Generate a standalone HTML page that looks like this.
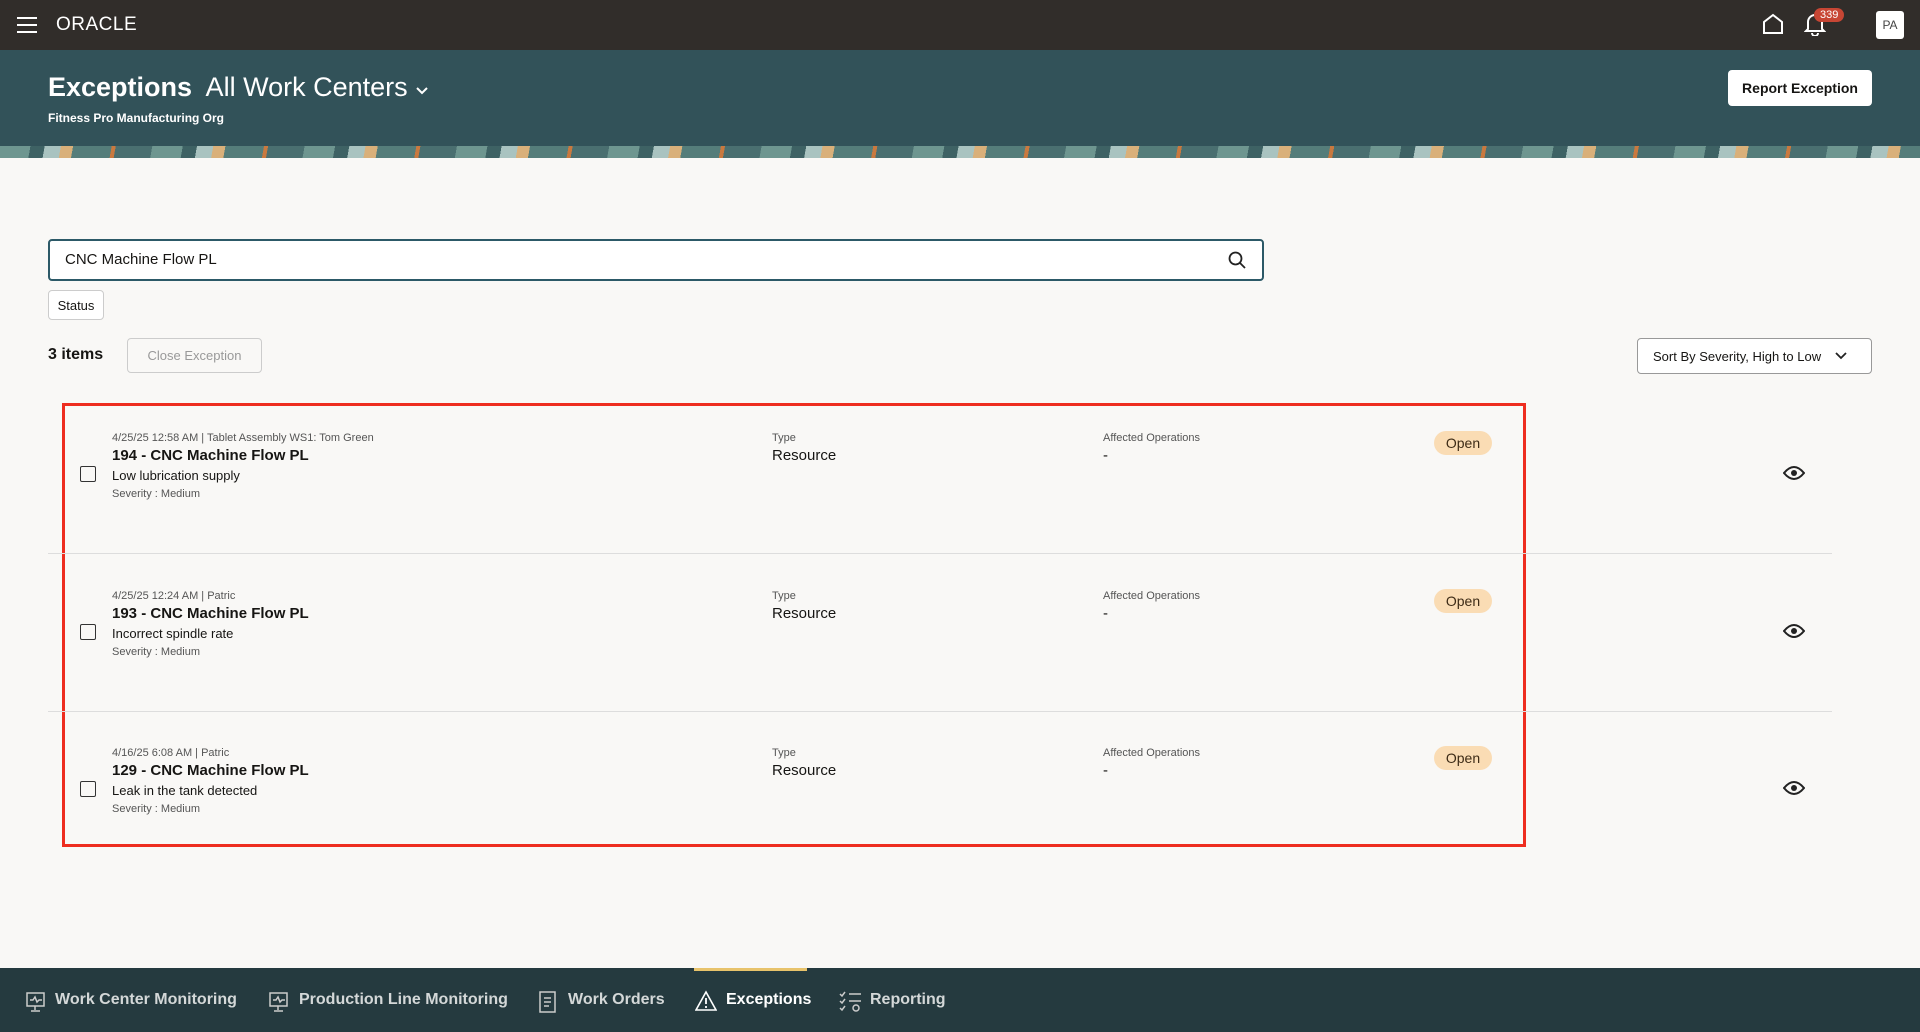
<!DOCTYPE html>
<html><head><meta charset="utf-8"><style>
*{box-sizing:border-box;margin:0;padding:0}
body{width:1920px;height:1032px;background:#f9f8f6;font-family:"Liberation Sans",sans-serif;color:#161513;position:relative;overflow:hidden}
.abs{position:absolute;white-space:nowrap}
.top{left:0;top:0;width:1920px;height:50px;background:#312d2a}
.hdr{left:0;top:50px;width:1920px;height:96px;background:#325259}
.band{left:0;top:146px;width:1920px;height:12px;background:repeating-linear-gradient(100deg,#6e9690 0 30px,#3e6264 30px 44px,#a9c3c0 44px 60px,#d9b07a 60px 72px,#557d7a 72px 110px,#c9793f 110px 114px,#4a6f70 114px 150px)}
.btn{background:#fff;border-radius:4px;font-size:14px;font-weight:bold;display:flex;align-items:center;justify-content:center}
.small{font-size:11px;color:#555}
.row .t{font-size:15px;font-weight:bold}
.cb{width:16px;height:16px;border:1.5px solid #333;border-radius:2px}
.pill{background:#fadcb4;border-radius:12px;font-size:14px;width:58px;height:24px;display:flex;align-items:center;justify-content:center;color:#3d2b16}
.nav{left:0;top:968px;width:1920px;height:64px;background:#253a3f}
.ni{top:991px;font-size:16px;color:#d4d8d8;font-weight:bold}
</style></head><body>
<div class="abs top"></div>
<svg class="abs" style="left:17px;top:17px" width="22" height="16"><path d="M0 1h20M0 8h20M0 15h20" stroke="#fff" stroke-width="2"/></svg>
<div class="abs" style="left:56px;top:14px;color:#fff;font-size:19px;letter-spacing:0.5px">ORACLE</div>
<svg class="abs" style="left:1762px;top:13px" width="22" height="22"><path d="M2 20V9L11 2l9 7v11z" fill="none" stroke="#fff" stroke-width="2"/></svg>
<svg class="abs" style="left:1804px;top:12px" width="22" height="24"><path d="M4 17V10a7 7 0 0 1 14 0v7l2 2H2zM8 21a3 3 0 0 0 6 0" fill="none" stroke="#fff" stroke-width="2"/></svg>
<div class="abs" style="left:1814px;top:8px;background:#c74634;color:#fff;font-size:11px;border-radius:9px;padding:1px 6px">339</div>
<div class="abs" style="left:1876px;top:11px;width:28px;height:28px;background:#fff;border-radius:3px;font-size:12px;color:#444;display:flex;align-items:center;justify-content:center">PA</div>
<div class="abs hdr"></div>
<div class="abs band"></div>
<div class="abs" style="left:48px;top:72px;color:#fff;font-size:27px"><b>Exceptions</b>&nbsp; All Work Centers <svg width="14" height="10"><path d="M2 2l5 5 5-5" fill="none" stroke="#fff" stroke-width="2"/></svg></div>
<div class="abs" style="left:48px;top:111px;color:#fff;font-size:12px;font-weight:bold">Fitness Pro Manufacturing Org</div>
<div class="abs btn" style="left:1728px;top:70px;width:144px;height:36px">Report Exception</div>
<div class="abs" style="left:48px;top:239px;width:1216px;height:42px;border:2px solid #2c5967;border-radius:4px;background:#fff;font-size:15px;padding:10px 15px">CNC Machine Flow PL</div>
<svg class="abs" style="left:1228px;top:251px" width="18" height="18"><circle cx="7.5" cy="7.5" r="6" fill="none" stroke="#222" stroke-width="1.8"/><path d="M12 12l5 5" stroke="#222" stroke-width="1.8"/></svg>
<div class="abs" style="left:48px;top:290px;width:56px;height:30px;border:1px solid #ccc;border-radius:4px;font-size:13px;display:flex;align-items:center;justify-content:center;background:#fff">Status</div>
<div class="abs" style="left:48px;top:346px;font-size:16px;font-weight:bold">3 items</div>
<div class="abs" style="left:127px;top:338px;width:135px;height:35px;border:1px solid #ccc;border-radius:4px;font-size:13px;color:#999;display:flex;align-items:center;justify-content:center">Close Exception</div>
<div class="abs" style="left:1637px;top:338px;width:235px;height:36px;border:1px solid #999;border-radius:4px;font-size:13px;display:flex;align-items:center;padding-left:15px;background:#fff">Sort By Severity, High to Low <svg style="margin-left:14px" width="12" height="8"><path d="M1 1l5 5 5-5" fill="none" stroke="#222" stroke-width="1.8"/></svg></div>
<div class="abs" style="left:62px;top:403px;width:1464px;height:444px;border:3px solid #ee2d1f"></div>
<div class="abs" style="left:48px;top:553px;width:1784px;height:1px;background:#ddd"></div>
<div class="abs" style="left:48px;top:711px;width:1784px;height:1px;background:#ddd"></div>

<div class="abs row" style="left:0;top:0">
<div class="abs cb" style="left:80px;top:466px"></div>
<div class="abs small" style="left:112px;top:432px">4/25/25 12:58 AM | Tablet Assembly WS1: Tom Green</div>
<div class="abs t" style="left:112px;top:447px">194 - CNC Machine Flow PL</div>
<div class="abs" style="left:112px;top:468px;font-size:13px">Low lubrication supply</div>
<div class="abs small" style="left:112px;top:488px">Severity : Medium</div>
<div class="abs small" style="left:772px;top:432px">Type</div><div class="abs" style="left:772px;top:447px;font-size:15px">Resource</div>
<div class="abs small" style="left:1103px;top:432px">Affected Operations</div><div class="abs" style="left:1103px;top:447px;font-size:15px">-</div>
<div class="abs pill" style="left:1434px;top:431px">Open</div>
<svg class="abs" style="left:1783px;top:465px" width="22" height="16"><path d="M1 8Q11-4 21 8Q11 20 1 8z" fill="none" stroke="#222" stroke-width="2"/><circle cx="11" cy="8" r="3" fill="#222"/></svg>
</div>
<div class="abs row" style="left:0;top:158px">
<div class="abs cb" style="left:80px;top:466px"></div>
<div class="abs small" style="left:112px;top:432px">4/25/25 12:24 AM | Patric</div>
<div class="abs t" style="left:112px;top:447px">193 - CNC Machine Flow PL</div>
<div class="abs" style="left:112px;top:468px;font-size:13px">Incorrect spindle rate</div>
<div class="abs small" style="left:112px;top:488px">Severity : Medium</div>
<div class="abs small" style="left:772px;top:432px">Type</div><div class="abs" style="left:772px;top:447px;font-size:15px">Resource</div>
<div class="abs small" style="left:1103px;top:432px">Affected Operations</div><div class="abs" style="left:1103px;top:447px;font-size:15px">-</div>
<div class="abs pill" style="left:1434px;top:431px">Open</div>
<svg class="abs" style="left:1783px;top:465px" width="22" height="16"><path d="M1 8Q11-4 21 8Q11 20 1 8z" fill="none" stroke="#222" stroke-width="2"/><circle cx="11" cy="8" r="3" fill="#222"/></svg>
</div>
<div class="abs row" style="left:0;top:315px">
<div class="abs cb" style="left:80px;top:466px"></div>
<div class="abs small" style="left:112px;top:432px">4/16/25 6:08 AM | Patric</div>
<div class="abs t" style="left:112px;top:447px">129 - CNC Machine Flow PL</div>
<div class="abs" style="left:112px;top:468px;font-size:13px">Leak in the tank detected</div>
<div class="abs small" style="left:112px;top:488px">Severity : Medium</div>
<div class="abs small" style="left:772px;top:432px">Type</div><div class="abs" style="left:772px;top:447px;font-size:15px">Resource</div>
<div class="abs small" style="left:1103px;top:432px">Affected Operations</div><div class="abs" style="left:1103px;top:447px;font-size:15px">-</div>
<div class="abs pill" style="left:1434px;top:431px">Open</div>
<svg class="abs" style="left:1783px;top:465px" width="22" height="16"><path d="M1 8Q11-4 21 8Q11 20 1 8z" fill="none" stroke="#222" stroke-width="2"/><circle cx="11" cy="8" r="3" fill="#222"/></svg>
</div>

<div class="abs nav"></div>
<div class="abs" style="left:694px;top:968px;width:113px;height:3px;background:#e8c36b"></div>
<svg class="abs" style="left:25px;top:991px" width="22" height="22"><rect x="2" y="2" width="17" height="13" fill="none" stroke="#ccc" stroke-width="1.5"/><path d="M5 9h3l2-3 2 5 2-2h3M10 15v4M6 20h9" fill="none" stroke="#ccc" stroke-width="1.5"/></svg>
<div class="abs ni" style="left:55px">Work Center Monitoring</div>
<svg class="abs" style="left:268px;top:991px" width="22" height="22"><rect x="2" y="2" width="17" height="13" fill="none" stroke="#ccc" stroke-width="1.5"/><path d="M5 9h3l2-3 2 5 2-2h3M10 15v4M6 20h9" fill="none" stroke="#ccc" stroke-width="1.5"/></svg>
<div class="abs ni" style="left:299px">Production Line Monitoring</div>
<svg class="abs" style="left:538px;top:990px" width="20" height="24"><rect x="2" y="2" width="15" height="20" fill="none" stroke="#ccc" stroke-width="1.5"/><path d="M6 8h7M6 12h7M6 16h5" stroke="#ccc" stroke-width="1.5"/></svg>
<div class="abs ni" style="left:568px">Work Orders</div>
<svg class="abs" style="left:695px;top:990px" width="22" height="22"><path d="M11 2L21 20H1z" fill="none" stroke="#fff" stroke-width="1.6"/><path d="M11 8v6M11 16v2" stroke="#fff" stroke-width="1.8"/></svg>
<div class="abs ni" style="left:726px;color:#fff">Exceptions</div>
<svg class="abs" style="left:839px;top:990px" width="24" height="24"><path d="M1 4l2 2 3-4M1 11l2 2 3-4M1 18l2 2 3-4M10 4h12M10 11h12" fill="none" stroke="#ccc" stroke-width="1.5"/><circle cx="17" cy="18" r="3" fill="none" stroke="#ccc" stroke-width="1.5"/></svg>
<div class="abs ni" style="left:870px">Reporting</div>
</body></html>
